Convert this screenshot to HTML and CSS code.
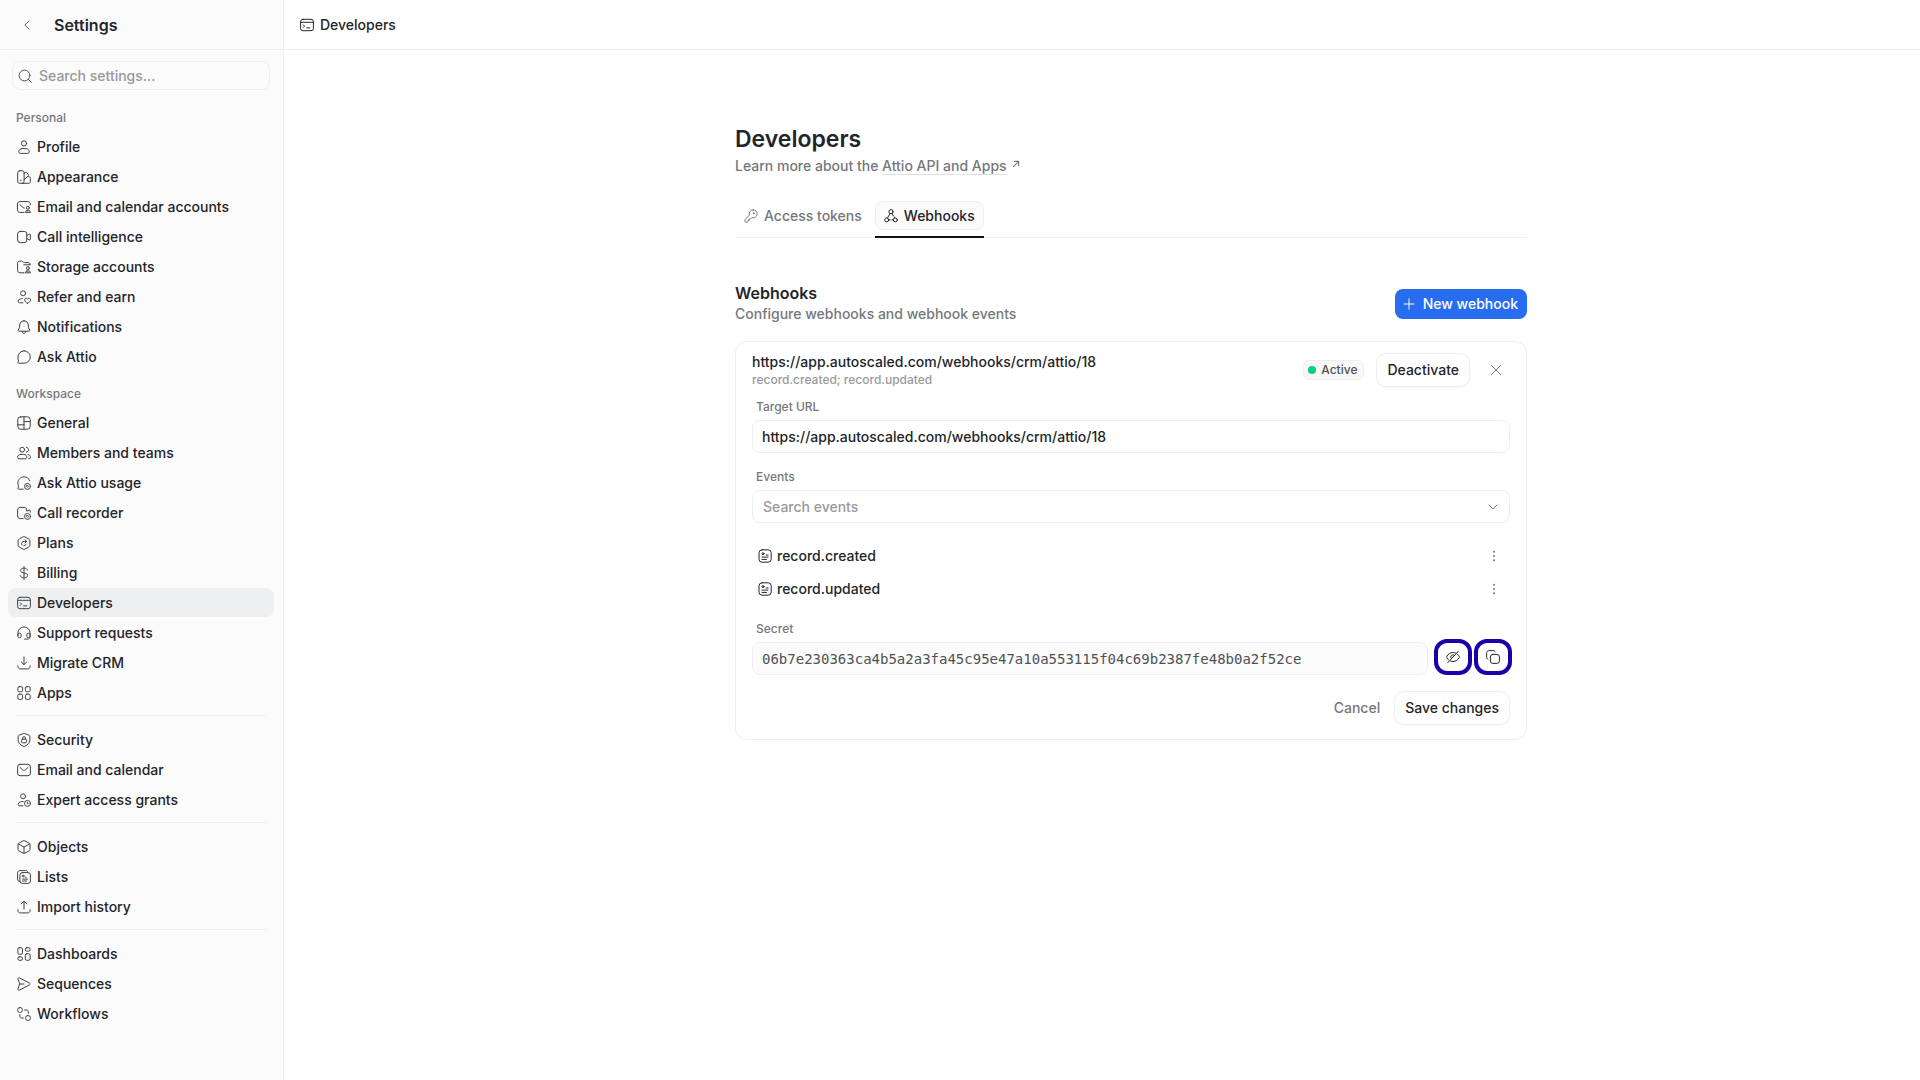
FILE: index.html
```html
<!DOCTYPE html>
<html lang="en">
<head>
<meta charset="utf-8">
<meta name="viewport" content="width=device-width, initial-scale=1">
<title>Developers</title>
<link rel="stylesheet" href="styles.css">
</head>
<body>
<svg class="sprite" aria-hidden="true">
  <symbol id="i-profile" viewBox="0 0 14 14"><circle cx="7" cy="3.4" r="2.6"/><path d="M4.9 8.6h4.2c1.9 0 3.1 1.5 3.1 3.2 0 .9-.6 1.6-1.5 1.6H3.3c-.9 0-1.5-.7-1.5-1.6 0-1.7 1.2-3.2 3.1-3.2z"/></symbol>
  <symbol id="i-appearance" viewBox="0 0 14 14"><rect x=".7" y=".7" width="6.4" height="12.6" rx="2"/><path d="M7.1 3.2l1.5-.8c.6-.3 1.2-.1 1.6.4l1.1 1.900c.3.6.1 1.200-.4 1.600L7.100 9.500M10.800 6.600h.9c1 0 1.600.7 1.600 1.600v3.500c0 .9-.7 1.600-1.600 1.600H5"/><circle class="dot" cx="3.900" cy="10.300" r=".8"/></symbol>
  <symbol id="i-mailuser" viewBox="0 0 14 14"><path d="M7 12.400H2.900C1.500 12.400.5 11.400.5 10V4c0-1.400 1-2.400 2.400-2.400h8c1.400 0 2.400 1 2.400 2.400v.8M2.900 4.600l3.300 3 .9.300"/><circle cx="10.900" cy="7.800" r="1.500"/><path d="M10 10.700h1.900c1 0 1.600.7 1.600 1.700H8.300c0-1 .7-1.700 1.700-1.700z"/></symbol>
  <symbol id="i-video" viewBox="0 0 14 14"><rect x=".6" y="1.400" width="9.200" height="11.200" rx="2.600"/><path d="M9.800 5.600l2.500-1.500c.5-.3 1 0 1 .5v4.800c0 .5-.5.800-1 .5L9.800 8.400"/></symbol>
  <symbol id="i-folderuser" viewBox="0 0 14 14"><path d="M7 12.800H3C1.600 12.800.6 11.800.6 10.400V3.300C.6 2 1.500 1.100 2.800 1.100h1.700c1.500 0 1.500 1.500 3 1.500H11c1.200 0 2.100.7 2.200 2M6.800 4.800h6.400"/><circle cx="10.900" cy="8.100" r="1.500"/><path d="M10 11h1.900c1 0 1.600.7 1.600 1.800H8.300c0-1.100.7-1.800 1.700-1.800z"/></symbol>
  <symbol id="i-userheart" viewBox="0 0 14 14"><circle cx="6.100" cy="3.300" r="2.500"/><path d="M5.800 12.800H2.600c-1 0-1.600-.8-1.400-1.700.4-1.500 1.700-2.500 3.300-2.500h.9M10.600 13.300C8.900 12.400 7.600 11.300 7.600 9.900c0-1.800 2.200-2.300 3-.8.800-1.500 3-1 3 .8 0 1.400-1.300 2.500-3 3.400z"/></symbol>
  <symbol id="i-bell" viewBox="0 0 14 14"><path d="M7 .8c-2.600 0-4.100 1.900-4.300 4.200L2.500 7.800 1.300 10c-.3.600.1 1.200.7 1.200h10c.6 0 1-.6.700-1.200l-1.200-2.200L11.300 5C11.100 2.700 9.600.8 7 .8zM5 11.400c.2 1.200 1 1.900 2 1.900s1.800-.7 2-1.900"/></symbol>
  <symbol id="i-chat" viewBox="0 0 14 14"><path d="M7.100.8a6.200 6.200 0 1 1 0 12.400H1.800c-.7 0-1.100-.7-.7-1.300l.5-.9C1.100 9.900.9 8.500.9 7A6.200 6.200 0 0 1 7.100.8z"/></symbol>
  <symbol id="i-layout" viewBox="0 0 14 14"><rect x=".8" y=".8" width="12.400" height="12.400" rx="2.800"/><path d="M7 .8v12.400M.8 8.800H7M7 5.600h6.200"/></symbol>
  <symbol id="i-members" viewBox="0 0 14 14"><circle cx="5.200" cy="3.700" r="2.400"/><path d="M3.600 8.400h3.200c1.900 0 3 1.300 3 2.900 0 .9-.6 1.500-1.400 1.500H2c-.8 0-1.400-.6-1.400-1.500 0-1.600 1.100-2.900 3-2.900zM9.400 1.300c2.900.2 2.900 4.600 0 4.800M11 8.500c1.500.3 2.500 1.400 2.500 2.800 0 .9-.5 1.500-1.400 1.500h-.3"/></symbol>
  <symbol id="i-chatcoin" viewBox="0 0 14 14"><path d="M6.200 13.200H1.800c-.7 0-1.100-.7-.7-1.300l.5-.9C1.100 9.900.9 8.500.9 7 .9 3.600 3.600.8 7 .8c2.600 0 4.900 1.600 5.800 4"/><circle cx="10.500" cy="10.400" r="3"/><path d="M10.500 9.400l1 1-1 1-1-1z"/></symbol>
  <symbol id="i-reccoin" viewBox="0 0 14 14"><path d="M6.200 12.600H3.200C1.700 12.600.6 11.500.6 10V4c0-1.500 1.100-2.600 2.600-2.600h4c1.500 0 2.600 1.100 2.600 2.600v1.200l2.500-1.100c.5-.2 1 .1 1 .6v1.500"/><circle cx="10.500" cy="10.400" r="3"/><path d="M10.500 9.400l1 1-1 1-1-1z"/></symbol>
  <symbol id="i-plans" viewBox="0 0 14 14"><path d="M6.200.8q.8-.4 1.600 0l4.300 2.400q.8.500.8 1.400v4.800q0 .9-.8 1.400l-4.300 2.400q-.8.400-1.600 0l-4.300-2.400q-.8-.5-.8-1.400V4.600q0-.9.8-1.400z"/><path d="M9.400 5.400H7.300A2.300 2.300 0 0 0 5 9M8.100 3.900l1.500 1.500-1.500 1.500M9.200 8.200a2.400 2.400 0 0 1-2.300 1.600"/></symbol>
  <symbol id="i-dollar" viewBox="0 0 14 14"><path d="M7 .6v12.800M10.500 4.100C10.200 2.900 9 2.200 7.200 2.200h-.5C4.800 2.200 3.600 3.100 3.600 4.500c0 3.500 7 1.500 7 5 0 1.400-1.200 2.300-3.200 2.300h-.8c-1.900 0-3.200-.8-3.400-2.200"/></symbol>
  <symbol id="i-terminal" viewBox="0 0 14 14"><rect x=".6" y="1.300" width="12.800" height="11.400" rx="2.400"/><path d="M.6 4.300h12.800M3.300 6.800l1.300 1.300-1.300 1.300M6.700 9.900h3"/></symbol>
  <symbol id="i-headset" viewBox="0 0 14 14"><path d="M.9 9.500V7a6.100 6.100 0 0 1 12.200 0v3.600c0 1.500-1 2.500-2.500 2.500H7.600"/><path d="M.9 8.600c0-.8.600-1.300 1.300-1.300h.6c.8 0 1.300.5 1.300 1.300v1.800c0 .8-.5 1.300-1.300 1.300h-.6c-.7 0-1.300-.5-1.300-1.300zM13.100 8.600c0-.8-.6-1.300-1.300-1.300h-.6c-.8 0-1.300.5-1.300 1.300v1.800c0 .8.500 1.300 1.300 1.300h.6c.7 0 1.300-.5 1.300-1.300z"/></symbol>
  <symbol id="i-download" viewBox="0 0 14 14"><path d="M7 .9v7.600M4.300 6L7 8.700 9.700 6M.9 9.700v.8c0 1.500 1 2.400 2.400 2.400h7.400c1.400 0 2.400-.9 2.400-2.400v-.8"/></symbol>
  <symbol id="i-upload" viewBox="0 0 14 14"><path d="M7 9V1.300M4.300 3.900L7 1.200l2.700 2.700M.9 9.700v.8c0 1.500 1 2.400 2.400 2.400h7.400c1.400 0 2.400-.9 2.400-2.400v-.8"/></symbol>
  <symbol id="i-apps" viewBox="0 0 14 14"><rect x=".8" y=".6" width="4.800" height="5.200" rx="1.500"/><rect x="8.400" y=".6" width="4.800" height="5.200" rx="1.500"/><rect x=".8" y="8.200" width="4.800" height="5.200" rx="1.500"/><rect x="8.400" y="8.200" width="4.800" height="5.200" rx="1.500"/></symbol>
  <symbol id="i-shield" viewBox="0 0 14 14"><path d="M6.300.6q.7-.3 1.400 0l4.200 1.500q1 .4 1 1.400v3.200c0 3.200-2 5.100-4.900 6.500q-1 .5-2 0C3.100 11.800 1.100 9.900 1.100 6.700V3.500q0-1 1-1.400z"/><rect x="4.500" y="6.200" width="5" height="3.600" rx="1"/><path d="M5.500 6.200v-1a1.500 1.500 0 0 1 3 0v1"/></symbol>
  <symbol id="i-mail" viewBox="0 0 14 14"><rect x=".6" y="1.300" width="12.800" height="11.400" rx="2.500"/><path d="M3 4.400l2.500 2.400c.9.800 2.100.8 3 0L11 4.400"/></symbol>
  <symbol id="i-usercoin" viewBox="0 0 14 14"><circle cx="6.100" cy="3.300" r="2.500"/><path d="M6 12.800H2.600c-1 0-1.600-.8-1.400-1.700.4-1.500 1.700-2.500 3.300-2.500h1.700"/><circle cx="10.500" cy="10.400" r="3"/><path d="M10.300 9.200v1.500h.9"/></symbol>
  <symbol id="i-cube" viewBox="0 0 14 14"><path d="M6.200.8q.8-.4 1.600 0l4.300 2.300q.9.500.9 1.400v5q0 .9-.9 1.400l-4.300 2.300q-.8.400-1.600 0l-4.300-2.300Q1 10.400 1 9.500v-5q0-.9.900-1.400zM1.500 3.900L7 7l5.500-3.100M7 7v6.300"/></symbol>
  <symbol id="i-lists" viewBox="0 0 14 14"><rect x="2.900" y="2.600" width="10.500" height="10.800" rx="2.400"/><path d="M2.500 11.600C1.300 11.300.6 10.500.6 9.200V3.100C.6 1.600 1.600.6 3.100.6h5.500c1.100 0 1.900.5 2.300 1.500M8.500 7.200h.8M5.600 9.100h5M5.600 11h4"/><circle cx="6.200" cy="6" r=".9"/></symbol>
  <symbol id="i-record" viewBox="0 0 14 14"><rect x="1" y=".8" width="12.200" height="12.400" rx="3"/><circle cx="5" cy="4.700" r="1"/><path d="M8.200 6h2M4 8.100h6M4 10.400h4.500"/></symbol>
  <symbol id="i-dash" viewBox="0 0 14 14"><rect x=".9" y=".7" width="4.600" height="6.600" rx="1.400"/><rect x="8.300" y=".7" width="4.800" height="3.400" rx="1.400"/><rect x=".9" y="9.900" width="4.600" height="3.400" rx="1.400"/><rect x="8.300" y="6.700" width="4.800" height="6.600" rx="1.400"/></symbol>
  <symbol id="i-send" viewBox="0 0 14 14"><path d="M1 2.200C.7 1.200 1.500.5 2.400.9l10.100 5.200c.8.400.8 1.400 0 1.800L2.400 13.100c-.9.400-1.700-.3-1.400-1.300L2.600 7zM2.600 7h4.300"/></symbol>
  <symbol id="i-flow" viewBox="0 0 14 14"><rect x=".7" y=".6" width="4.600" height="4.800" rx="1.800"/><rect x="8.700" y="8.600" width="4.600" height="4.800" rx="1.800"/><path d="M7.600 3h2c1.100 0 1.700.6 1.700 1.700v1.700M2.900 7.600v1.700c0 1.100.7 1.700 1.700 1.700h1.700"/></symbol>
  <symbol id="i-search" viewBox="0 0 14 14"><circle cx="6.500" cy="6.500" r="5.400"/><path d="M10.400 10.400l3 3"/></symbol>
  <symbol id="i-back" viewBox="0 0 14 14"><path d="M9 3L4.800 7 9 11"/></symbol>
  <symbol id="i-key" viewBox="0 0 14 14"><path d="M9.200.8a4 4 0 1 1-1.300 7.800L6.600 9.900H5.300v1.300H4v1.200c0 .5-.3.800-.8.800H1.700c-.5 0-.8-.3-.8-.8v-1.300c0-.3.100-.5.300-.7l4.200-4.300A4 4 0 0 1 9.200.8z"/><circle cx="9.700" cy="4.300" r=".6"/></symbol>
  <symbol id="i-hook" viewBox="0 0 14 14"><circle cx="7" cy="2.700" r="2.100"/><circle cx="2.700" cy="10.900" r="2"/><circle cx="11.300" cy="10.900" r="2"/><path d="M6 4.600L3.500 9M8.100 4.600l1.100 2M10.200 7.800l.5 1.100M4.700 10.900h1.500M7.800 10.900h1.500"/></symbol>
  <symbol id="i-plus" viewBox="0 0 14 14"><path d="M7 2v10M2 7h10"/></symbol>
  <symbol id="i-close" viewBox="0 0 14 14"><path d="M2.500 2.500l9 9M11.500 2.500l-9 9"/></symbol>
  <symbol id="i-down" viewBox="0 0 14 14"><path d="M3 5l4 4 4-4"/></symbol>
  <symbol id="i-more" viewBox="0 0 14 14"><circle class="dot" cx="7" cy="2" r="1.200"/><circle class="dot" cx="7" cy="7" r="1.200"/><circle class="dot" cx="7" cy="12" r="1.200"/></symbol>
  <symbol id="i-ext" viewBox="0 0 14 14"><path d="M2.500 11.500l9-9M4.500 2.500h7v7"/></symbol>
  <symbol id="i-eye" viewBox="0 0 14 14"><path d="M12.300 1.200L1.700 12.800M10.200 3.500C9.300 2.800 8.200 2.500 7 2.500 4.100 2.500 1.800 4.400.8 6.400c-.2.400-.2.800 0 1.200.5.900 1.100 1.700 1.900 2.400M11.700 4.500c.6.600 1.100 1.200 1.500 1.900.2.400.2.800 0 1.200-1 2-3.300 3.900-6.200 3.900-.9 0-1.700-.2-2.500-.5M8.300 5.300a2.200 2.200 0 0 0-3 3.200"/></symbol>
  <symbol id="i-copy" viewBox="0 0 14 14"><rect x="4.400" y="4.400" width="9" height="9" rx="2.500"/><path d="M1.900 9.300C1.100 8.900.6 8.200.6 7.200V3.400C.6 1.700 1.700.6 3.400.6h3.800c1 0 1.700.5 2.100 1.300"/></symbol>
</svg>

<div class="app">
  <aside class="sidebar">
    <header class="topbar sidebar-top">
      <button class="back" type="button" aria-label="Back"><svg class="icon"><use href="#i-back"/></svg></button>
      <span class="settings-title">Settings</span>
    </header>
    <label class="search">
      <svg class="icon"><use href="#i-search"/></svg>
      <input type="search" aria-label="Search settings" placeholder="Search settings...">
    </label>
    <nav class="nav">
      <h2 class="nav-heading">Personal</h2>
      <a class="item" href="#"><svg class="icon"><use href="#i-profile"/></svg>Profile</a>
      <a class="item" href="#"><svg class="icon"><use href="#i-appearance"/></svg>Appearance</a>
      <a class="item" href="#"><svg class="icon"><use href="#i-mailuser"/></svg>Email and calendar accounts</a>
      <a class="item" href="#"><svg class="icon"><use href="#i-video"/></svg>Call intelligence</a>
      <a class="item" href="#"><svg class="icon"><use href="#i-folderuser"/></svg>Storage accounts</a>
      <a class="item" href="#"><svg class="icon"><use href="#i-userheart"/></svg>Refer and earn</a>
      <a class="item" href="#"><svg class="icon"><use href="#i-bell"/></svg>Notifications</a>
      <a class="item" href="#"><svg class="icon"><use href="#i-chat"/></svg>Ask Attio</a>
      <h2 class="nav-heading nav-heading-next">Workspace</h2>
      <a class="item" href="#"><svg class="icon"><use href="#i-layout"/></svg>General</a>
      <a class="item" href="#"><svg class="icon"><use href="#i-members"/></svg>Members and teams</a>
      <a class="item" href="#"><svg class="icon"><use href="#i-chatcoin"/></svg>Ask Attio usage</a>
      <a class="item" href="#"><svg class="icon"><use href="#i-reccoin"/></svg>Call recorder</a>
      <a class="item" href="#"><svg class="icon"><use href="#i-plans"/></svg>Plans</a>
      <a class="item" href="#"><svg class="icon"><use href="#i-dollar"/></svg>Billing</a>
      <a class="item item-active" href="#" aria-current="page"><svg class="icon"><use href="#i-terminal"/></svg>Developers</a>
      <a class="item" href="#"><svg class="icon"><use href="#i-headset"/></svg>Support requests</a>
      <a class="item" href="#"><svg class="icon"><use href="#i-download"/></svg>Migrate CRM</a>
      <a class="item" href="#"><svg class="icon"><use href="#i-apps"/></svg>Apps</a>
      <hr class="rule">
      <a class="item" href="#"><svg class="icon"><use href="#i-shield"/></svg>Security</a>
      <a class="item" href="#"><svg class="icon"><use href="#i-mail"/></svg>Email and calendar</a>
      <a class="item" href="#"><svg class="icon"><use href="#i-usercoin"/></svg>Expert access grants</a>
      <hr class="rule">
      <a class="item" href="#"><svg class="icon"><use href="#i-cube"/></svg>Objects</a>
      <a class="item" href="#"><svg class="icon"><use href="#i-lists"/></svg>Lists</a>
      <a class="item" href="#"><svg class="icon"><use href="#i-upload"/></svg>Import history</a>
      <hr class="rule">
      <a class="item" href="#"><svg class="icon"><use href="#i-dash"/></svg>Dashboards</a>
      <a class="item" href="#"><svg class="icon"><use href="#i-send"/></svg>Sequences</a>
      <a class="item" href="#"><svg class="icon"><use href="#i-flow"/></svg>Workflows</a>
    </nav>
  </aside>

  <main class="main">
    <header class="topbar main-top"><svg class="icon"><use href="#i-terminal"/></svg>Developers</header>
    <div class="content">
      <h1 class="title">Developers</h1>
      <p class="lead">Learn more about the <a class="lead-link" href="#">Attio API and Apps</a><svg class="icon icon-ext"><use href="#i-ext"/></svg></p>

      <div class="tabs" role="tablist">
        <button class="tab" type="button" role="tab"><span class="tab-face"><svg class="icon"><use href="#i-key"/></svg>Access tokens</span></button>
        <button class="tab tab-active" type="button" role="tab" aria-selected="true"><span class="tab-face"><svg class="icon"><use href="#i-hook"/></svg>Webhooks</span></button>
      </div>

      <section class="section-head">
        <div>
          <h2 class="section-title">Webhooks</h2>
          <p class="section-sub">Configure webhooks and webhook events</p>
        </div>
        <button class="primary" type="button"><svg class="icon"><use href="#i-plus"/></svg>New webhook</button>
      </section>

      <form class="card">
        <div class="card-head">
          <div class="card-name">
            <h3 class="card-title">https://app.autoscaled.com/webhooks/crm/attio/18</h3>
            <p class="card-sub">record.created; record.updated</p>
          </div>
          <span class="badge">Active</span>
          <button class="button" type="button">Deactivate</button>
          <button class="close" type="button" aria-label="Close"><svg class="icon"><use href="#i-close"/></svg></button>
        </div>

        <label class="label" for="url">Target URL</label>
        <input class="field" id="url" type="text" value="https://app.autoscaled.com/webhooks/crm/attio/18">

        <label class="label label-next" for="events">Events</label>
        <div class="combo">
          <input class="combo-input" id="events" type="text" placeholder="Search events">
          <svg class="icon"><use href="#i-down"/></svg>
        </div>

        <ul class="events">
          <li class="event"><svg class="icon"><use href="#i-record"/></svg><span>record.created</span><button class="more" type="button" aria-label="More"><svg class="icon"><use href="#i-more"/></svg></button></li>
          <li class="event"><svg class="icon"><use href="#i-record"/></svg><span>record.updated</span><button class="more" type="button" aria-label="More"><svg class="icon"><use href="#i-more"/></svg></button></li>
        </ul>

        <label class="label label-next" for="secret">Secret</label>
        <div class="secret">
          <input class="field field-secret" id="secret" type="text" readonly value="06b7e230363ca4b5a2a3fa45c95e47a10a553115f04c69b2387fe48b0a2f52ce">
          <button class="ring" type="button" aria-label="Hide secret"><svg class="icon"><use href="#i-eye"/></svg></button>
          <button class="ring" type="button" aria-label="Copy secret"><svg class="icon"><use href="#i-copy"/></svg></button>
        </div>

        <div class="actions">
          <button class="cancel" type="button">Cancel</button>
          <button class="button" type="submit">Save changes</button>
        </div>
      </form>
    </div>
  </main>
</div>
</body>
</html>
```
FILE: styles.css
```css
* { box-sizing: border-box; }

body {
  margin: 0;
  background: #fff;
  color: #232529;
  font: 500 14px/20px Inter, "Liberation Sans", sans-serif;
}

h1, h2, h3, p, ul { margin: 0; padding: 0; font-size: 14px; font-weight: 500; }
ul { list-style: none; }
a { color: inherit; text-decoration: none; }
button, input { font: inherit; color: inherit; }
button { padding: 0; border: 0; background: none; cursor: pointer; }
input { min-width: 0; outline: 0; }
input::placeholder { color: #999; opacity: 1; }

.sprite { display: none; }
.icon {
  flex: none;
  width: 14px;
  height: 14px;
  fill: none;
  stroke: currentColor;
  stroke-width: 1;
  stroke-linecap: round;
  stroke-linejoin: round;
}
.dot { fill: currentColor; stroke: none; }

.app { display: flex; min-height: 100vh; }

/* Sidebar */
.sidebar {
  flex: none;
  width: 284px;
  background: #fbfbfb;
  border-right: 1px solid #f0f0f1;
}
.topbar {
  display: flex;
  align-items: center;
  height: 50px;
  border-bottom: 1px solid #f0f0f1;
}
.sidebar-top { gap: 20px; padding-left: 20px; }
.back { display: flex; color: #666; }
.settings-title { font-size: 16px; font-weight: 600; }

.search {
  display: flex;
  align-items: center;
  gap: 7px;
  height: 29px;
  margin: 11px 13px 0 12px;
  padding: 0 5px;
  border: 1px solid #eeeff1;
  border-radius: 8px;
  color: #505154;
}
.search input { flex: 1; padding: 0; border: 0; background: none; }

.nav { display: flex; flex-direction: column; gap: 1px; padding: 18px 9px 0 8px; }
.nav-heading { margin-bottom: 3px; padding-left: 8px; font-size: 12px; line-height: 20px; color: #75777c; }
.nav-heading-next { margin-top: 12px; }
.item {
  display: flex;
  align-items: center;
  gap: 6px;
  height: 29px;
  padding-left: 9px;
  border-radius: 8px;
}
.item .icon { color: #404144; }
.item-active { background: #eeeff1; }
.rule { width: 250px; height: 1px; margin: 7px 0 8px 8px; border: 0; background: #eeeff1; }

/* Main column */
.main { flex: 1; min-width: 0; }
.main-top { gap: 6px; padding-left: 16px; }
.content { max-width: 850px; margin: 0 auto; padding: 73px 0 40px 58px; }

.title { font-size: 23px; line-height: 32px; font-weight: 600; }
.lead { margin-top: 1px; color: #75777c; }
.lead-link { border-bottom: 1px solid #e0e0e2; }
.icon-ext { width: 8px; height: 8px; margin-left: 5px; vertical-align: 3px; stroke-width: 2; }

.tabs { display: flex; gap: 4px; margin-top: 25px; border-bottom: 1px solid #eeeff1; }
.tab { margin-bottom: -1px; padding-bottom: 6px; border-bottom: 2px solid transparent; color: #75777c; }
.tab-face {
  display: flex;
  align-items: center;
  gap: 6px;
  height: 29px;
  padding: 0 8px;
  border: 1px solid transparent;
  border-radius: 8px;
}
.tab-active { border-color: #111; color: #232529; }
.tab-active .tab-face { background: #fbfbfb; border-color: #eeeff1; }

.section-head { display: flex; align-items: center; justify-content: space-between; margin-top: 45px; }
.section-title { font-size: 16px; line-height: 21px; font-weight: 600; }
.section-sub { color: #75777c; }
.primary {
  display: flex;
  align-items: center;
  gap: 7px;
  height: 30px;
  padding: 0 9px 0 7px;
  border-radius: 8px;
  background: #266df0;
  color: #fff;
}

/* Webhook card */
.card { margin-top: 17px; padding: 10px 16px 14px; border: 1px solid #eeeff1; border-radius: 12px; }
.card-head { display: flex; align-items: center; height: 36px; }
.card-name { flex: 1; min-width: 0; }
.card-sub { font-size: 12px; line-height: 16px; color: #999; }
.badge {
  display: flex;
  align-items: center;
  gap: 5px;
  height: 20px;
  margin-right: 12px;
  padding: 0 6px 0 4px;
  border: 1px solid #eeeff1;
  border-radius: 6px;
  background: #f8f8f9;
  font-size: 12px;
  color: #505154;
}
.badge::before { content: ""; width: 8px; height: 8px; border-radius: 50%; background: #06d182; }
.button {
  height: 34px;
  padding: 0 10px;
  border: 1px solid #eeeff1;
  border-radius: 10px;
  background: #fff;
  box-shadow: 0 1px 2px rgba(0, 0, 0, .04);
}
.close { display: flex; margin: 0 7px 0 19px; color: #75777c; }

.label { display: block; padding-left: 4px; margin-top: 9px; font-size: 12px; line-height: 20px; color: #75777c; }
.field, .combo {
  display: flex;
  align-items: center;
  width: 100%;
  height: 33px;
  margin-top: 3px;
  padding: 0 9px;
  border: 1px solid #eeeff1;
  border-radius: 8px;
  background: #fff;
}
.label-next { margin-top: 14px; }
.combo { padding-left: 10px; }
.combo-input { flex: 1; padding: 0; border: 0; background: none; }
.combo .icon { color: #75777c; }

.events { margin-top: 16px; }
.event { display: flex; align-items: center; gap: 5px; height: 33px; padding-left: 6px; }
.more { display: flex; margin-left: auto; padding-right: 10px; color: #75777c; }
.more .icon { width: 12px; height: 12px; }

.secret { display: flex; align-items: flex-end; gap: 2px; margin-right: -2px; }
.field-secret {
  flex: 1;
  margin-right: 4px;
  background: #fbfbfb;
  color: #505154;
  font: 14px/20px "DejaVu Sans Mono", monospace;
}
.ring {
  display: flex;
  align-items: center;
  justify-content: center;
  width: 38px;
  height: 36px;
  border: 4px solid #1a00a8;
  border-radius: 13px;
}
.actions { display: flex; align-items: center; justify-content: flex-end; gap: 14px; margin-top: 16px; }
.cancel { color: #75777c; }
```
